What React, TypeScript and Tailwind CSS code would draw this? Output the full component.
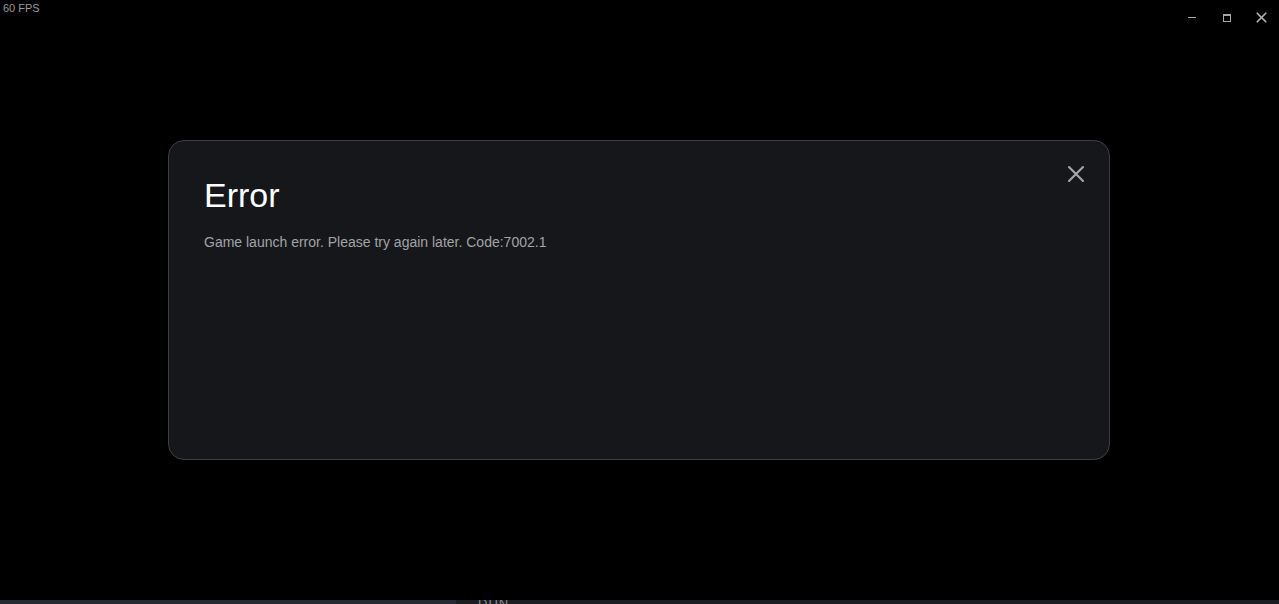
import { X } from 'lucide-react';

export default function App() {
  return (
    <div className="relative flex h-[604px] w-[1279px] flex-col overflow-hidden bg-black font-['Liberation_Sans',Arial,sans-serif]">
      <div className="absolute left-[3px] top-[3px] text-[11px] leading-none text-[#9a9a9a]">60 FPS</div>

      <div className="absolute right-0 top-0 flex h-[35px] items-center">
        <button className="flex h-[35px] w-[35px] items-center justify-center">
          <span className="h-[1px] w-[8px] bg-[#a8a8a8]" />
        </button>
        <button className="flex h-[35px] w-[35px] items-center justify-center">
          <span className="h-[8px] w-[8px] border border-t-2 border-[#a8a8a8]" />
        </button>
        <button className="flex h-[35px] w-[35px] items-center justify-center text-[#b0b0b0]">
          <X size={17} strokeWidth={2.4} />
        </button>
      </div>

      <div className="flex flex-1 items-start pl-[168px] pt-[140px]">
        <div className="relative h-[320px] w-[942px] rounded-[16px] border border-[#3e3f44] bg-[#16171b] px-[35px] pt-[34px]">
          <button className="absolute right-[19px] top-[19px] text-[#a6a7aa]">
            <X size={28} strokeWidth={1.8} />
          </button>
          <h1 className="text-[34px] leading-[40px] text-white">Error</h1>
          <p className="mt-[18px] text-[14px] leading-[18px] text-[#a3a3a6]">
            Game launch error. Please try again later. Code:7002.1
          </p>
        </div>
      </div>

      <div className="flex h-[4px] w-full">
        <div className="h-full w-[456px] bg-[#262a34]" />
        <div className="relative h-full flex-1 overflow-hidden bg-[#1b1d22]">
          <span className="absolute left-[22px] top-[-3px] text-[13px] leading-none tracking-[1px] text-[#8a8a8a]">DUN</span>
        </div>
      </div>
    </div>
  );
}
